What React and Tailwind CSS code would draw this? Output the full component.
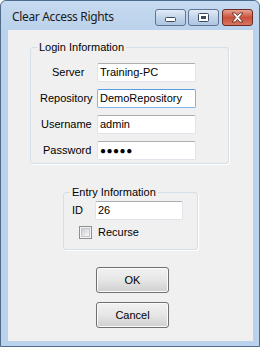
import React from 'react';

function CaptionButton({ kind }) {
  const isClose = kind === 'close';
  return (
    <div
      className={
        'w-[31px] h-[17px] rounded-[3px] border flex items-center justify-center ' +
        (isClose
          ? 'border-[#6b2a24] bg-gradient-to-b from-[#e6a293] via-[#c9503b] to-[#d8765e]'
          : 'border-[#5f7494] bg-gradient-to-b from-[#e2ebf6] via-[#c3d4ea] to-[#aec5e0]')
      }
    >
      {kind === 'min' && (
        <svg width="11" height="5" viewBox="0 0 11 5" className="mt-[4px]">
          <rect x="0.5" y="0.5" width="10" height="4" rx="1" fill="#ffffff" stroke="#3b4a61" />
        </svg>
      )}
      {kind === 'max' && (
        <svg width="11" height="9" viewBox="0 0 11 9">
          <rect x="0.5" y="0.5" width="10" height="8" rx="1" fill="#ffffff" stroke="#3b4a61" />
          <rect x="3" y="3" width="5" height="3" fill="#3b4a61" />
        </svg>
      )}
      {isClose && (
        <svg width="13" height="11" viewBox="0 0 13 11">
          <path
            d="M1 1h3.2l2.3 2.6L8.8 1H12L8.2 5.5 12 10H8.8L6.5 7.4 4.2 10H1l3.8-4.5z"
            fill="#ffffff"
            stroke="#5a1e18"
            strokeWidth="0.8"
            strokeLinejoin="round"
          />
        </svg>
      )}
    </div>
  );
}

function TextBox({ value, width, focused }) {
  return (
    <div
      className={
        'h-[19px] rounded-[2px] border bg-white flex items-center pl-[2px] text-[11px] text-black ' +
        (focused ? 'border-[#7eb4ea] border-t-[#569de5]' : 'border-[#e2e3ea] border-t-[#abadb3]') +
        ' ' +
        width
      }
    >
      {value}
    </div>
  );
}

function Row({ label, pad, value, focused }) {
  return (
    <div className="flex items-center h-[19px]">
      <div className={'w-[66px] text-[11px] text-black ' + pad}>{label}</div>
      <TextBox value={value} width="w-[99px]" focused={focused} />
    </div>
  );
}

function WinButton({ children, className }) {
  return (
    <div
      className={
        'w-[73px] h-[26px] rounded-[3px] border border-[#707070] bg-gradient-to-b from-[#f2f2f2] via-[#e6e6e6] to-[#cfcfcf] flex items-center justify-center text-[11px] text-black shadow-[inset_0_0_0_1px_#fbfbfb] ' +
        (className || '')
      }
    >
      {children}
    </div>
  );
}

export default function App() {
  return (
    <div className="w-[260px] h-[347px] bg-[#bad2eb] border border-[#4f6b8c] rounded-t-[6px] flex flex-col font-['Liberation_Sans',Arial,sans-serif]">
      {/* Title bar */}
      <div className="h-[29px] flex items-start pr-[6px] bg-gradient-to-b from-[#c6daf0] to-[#bad2eb] rounded-t-[6px]">
        <span className="ml-[11px] mt-[9px] text-[12px] leading-[14px] tracking-[-0.35px] text-[#1b1b1b] font-['Noto_Sans',sans-serif]">
          Clear Access Rights
        </span>
        <div className="ml-auto mt-[8px] flex">
          <CaptionButton kind="min" />
          <div className="w-[2px]" />
          <CaptionButton kind="max" />
          <div className="w-[3px]" />
          <CaptionButton kind="close" />
        </div>
      </div>

      {/* Client area */}
      <div className="ml-[7px] w-[245px] h-[311px] bg-[#f0f0f0] flex flex-col">
        <fieldset className="ml-[22px] mt-[10px] w-[199px] border border-[#d5dfe5] rounded-[3px] pt-[9px] pb-[3px] flex flex-col gap-[7px] shadow-[1px_1px_0_#ffffff]">
          <legend className="ml-[6px] px-[2px] text-[11px] leading-[14px] text-black">Login Information</legend>
          <Row label="Server" pad="pl-[21px]" value="Training-PC" />
          <Row label="Repository" pad="pl-[9px]" value="DemoRepository" focused />
          <Row label="Username" pad="pl-[10px]" value="admin" />
          <Row label="Password" pad="pl-[12px]" value={<span className="tracking-[0.5px] text-[10px]">●●●●●</span>} />
        </fieldset>

        <fieldset className="ml-[55px] mt-[21px] w-[135px] border border-[#d5dfe5] rounded-[3px] pt-[2px] pb-[10px] flex flex-col shadow-[1px_1px_0_#ffffff]">
          <legend className="ml-[6px] px-[2px] text-[11px] leading-[14px] text-black">Entry Information</legend>
          <div className="flex items-center h-[19px]">
            <div className="w-[31px] pl-[8px] text-[11px] text-black">ID</div>
            <TextBox value="26" width="w-[88px]" />
          </div>
          <div className="mt-[6px] flex items-center h-[13px] pl-[15px] gap-[6px]">
            <div className="w-[13px] h-[13px] border border-[#8e8f8f] bg-[#f4f4f4] flex items-center justify-center">
              <div className="w-[9px] h-[9px] border border-[#c4c7cc] bg-gradient-to-br from-[#cbcfd5] to-[#f6f6f6]" />
            </div>
            <span className="text-[11px] text-black">Recurse</span>
          </div>
        </fieldset>

        <WinButton className="ml-[88px] mt-[17px]">OK</WinButton>
        <WinButton className="ml-[88px] mt-[9px]">Cancel</WinButton>
      </div>
    </div>
  );
}
